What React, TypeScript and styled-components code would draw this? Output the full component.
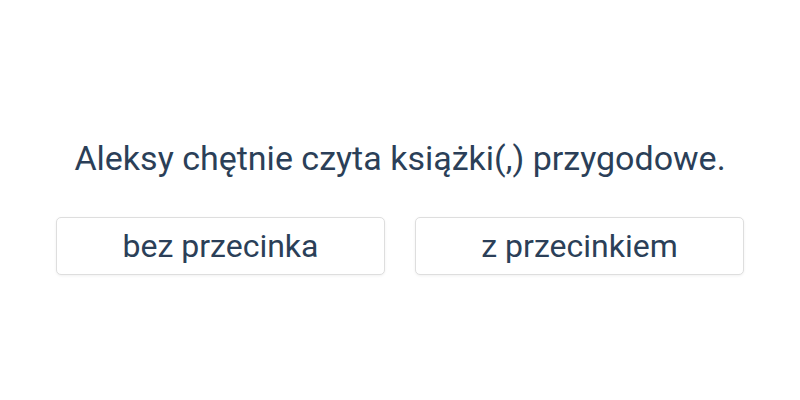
import styled, { createGlobalStyle } from "styled-components";

const GlobalStyle = createGlobalStyle`
  html, body {
    margin: 0;
    padding: 0;
    background: #ffffff;
  }
  body {
    font-family: Roboto, "Noto Sans", sans-serif;
    color: #2b3f58;
  }
`;

const Page = styled.main`
  width: 800px;
  height: 400px;
  display: flex;
  flex-direction: column;
  align-items: center;
  padding-top: 135px;
  box-sizing: border-box;
`;

const Sentence = styled.p`
  margin: 0;
  font-size: 34px;
  line-height: 46px;
  text-align: center;
`;

const Answers = styled.div`
  display: grid;
  grid-template-columns: repeat(2, 329px);
  gap: 30px;
  margin-top: 36px;
`;

const Answer = styled.button`
  height: 58px;
  background: #fff;
  border: 1px solid #dedede;
  border-radius: 5px;
  box-shadow: 0 1px 3px rgba(0, 0, 0, 0.06);
  font-family: Roboto, "Noto Sans", sans-serif;
  font-size: 32px;
  color: #2b3f58;
  cursor: pointer;
  padding: 0;
`;

const answers = ["bez przecinka", "z przecinkiem"];

const App = () => (
  <>
    <GlobalStyle />
    <Page>
      <Sentence>Aleksy chętnie czyta książki(,) przygodowe.</Sentence>
      <Answers>
        {answers.map((a) => (
          <Answer key={a}>{a}</Answer>
        ))}
      </Answers>
    </Page>
  </>
);

export default App;
